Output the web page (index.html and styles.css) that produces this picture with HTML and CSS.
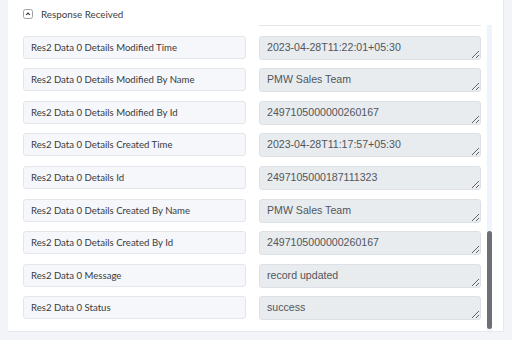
FILE: index.html
```html
<!DOCTYPE html>
<html lang="en">
  <head>
    <meta charset="UTF-8" />
    <title>Response Received</title>
    <link rel="stylesheet" href="styles.css">
  </head>
  <body>
    <div class="panel">
      <div class="section-header">
        <span class="toggle">
          <svg width="10" height="10" viewBox="0 0 10 10">
            <rect x="0.5" y="0.5" width="9" height="9" rx="2" fill="#fff" stroke="#9aa0a6" />
            <path d="M3.2 5.8 L5 4 L6.8 5.8" fill="none" stroke="#333" stroke-width="1.1" />
          </svg>
        </span>
        <span class="section-title">Response Received</span>
      </div>

      <div class="scroll-wrap">
        <div class="fields">
          <div></div>
          <div class="clip-edge"></div>

          <div class="field-label">Res2 Data 0 Details Modified Time</div>
          <textarea class="field-value" readonly>2023-04-28T11:22:01+05:30</textarea>

          <div class="field-label">Res2 Data 0 Details Modified By Name</div>
          <textarea class="field-value" readonly>PMW Sales Team</textarea>

          <div class="field-label">Res2 Data 0 Details Modified By Id</div>
          <textarea class="field-value" readonly>2497105000000260167</textarea>

          <div class="field-label">Res2 Data 0 Details Created Time</div>
          <textarea class="field-value" readonly>2023-04-28T11:17:57+05:30</textarea>

          <div class="field-label">Res2 Data 0 Details Id</div>
          <textarea class="field-value" readonly>2497105000187111323</textarea>

          <div class="field-label">Res2 Data 0 Details Created By Name</div>
          <textarea class="field-value" readonly>PMW Sales Team</textarea>

          <div class="field-label">Res2 Data 0 Details Created By Id</div>
          <textarea class="field-value" readonly>2497105000000260167</textarea>

          <div class="field-label">Res2 Data 0 Message</div>
          <textarea class="field-value" readonly>record updated</textarea>

          <div class="field-label">Res2 Data 0 Status</div>
          <textarea class="field-value" readonly>success</textarea>
        </div>

        <div class="scroll-track">
          <div class="scroll-thumb"></div>
        </div>
      </div>
    </div>
  </body>
</html>
```

FILE: styles.css
```css
* {
  box-sizing: border-box;
  margin: 0;
  padding: 0;
}

body {
  width: 512px;
  height: 340px;
  overflow: hidden;
  background: #f2f4f8;
  font-family: "Lato", "Noto Sans", sans-serif;
  color: #333;
}

.panel {
  margin-left: 8px;
  width: 496px;
  height: 332px;
  background: #fff;
  border-right: 1px solid #e4e8ef;
  border-bottom: 1px solid #e4e8ef;
  display: flex;
  flex-direction: column;
}

.section-header {
  height: 25px;
  display: flex;
  align-items: center;
  gap: 8px;
  padding-left: 15px;
  padding-top: 3px;
}

.toggle {
  display: flex;
}

.section-title {
  font-size: 9.8px;
  color: #3c4043;
}

.scroll-wrap {
  flex: 1;
  display: flex;
  overflow: hidden;
  padding-left: 15px;
}

.fields {
  width: 458px;
  display: grid;
  grid-template-columns: 223px 222px;
  grid-auto-rows: 23px;
  column-gap: 13px;
  row-gap: 9.6px;
  align-content: start;
  grid-template-rows: 1px;
}

.clip-edge {
  background: #e3e6ea;
}

.field-label {
  background: #f5f7fa;
  border: 1px solid #e3e7ec;
  border-radius: 3px;
  font-size: 9.6px;
  color: #3a3a3a;
  padding-left: 7px;
  display: flex;
  align-items: center;
}

.field-value {
  height: 24px;
  background: #e9ecef;
  border: 1px solid #dde1e6;
  border-radius: 3px;
  font-family: "Liberation Sans", Arial, sans-serif;
  font-size: 10.6px;
  color: #50565c;
  padding: 4px 7px;
  overflow: hidden;
  outline: none;
}

.scroll-track {
  margin-left: 6px;
  width: 5px;
  background: #eef4fc;
  display: flex;
  flex-direction: column;
  justify-content: flex-end;
  padding-bottom: 2px;
}

.scroll-thumb {
  height: 98px;
  background: #6b7077;
  border-radius: 3px;
}
```
